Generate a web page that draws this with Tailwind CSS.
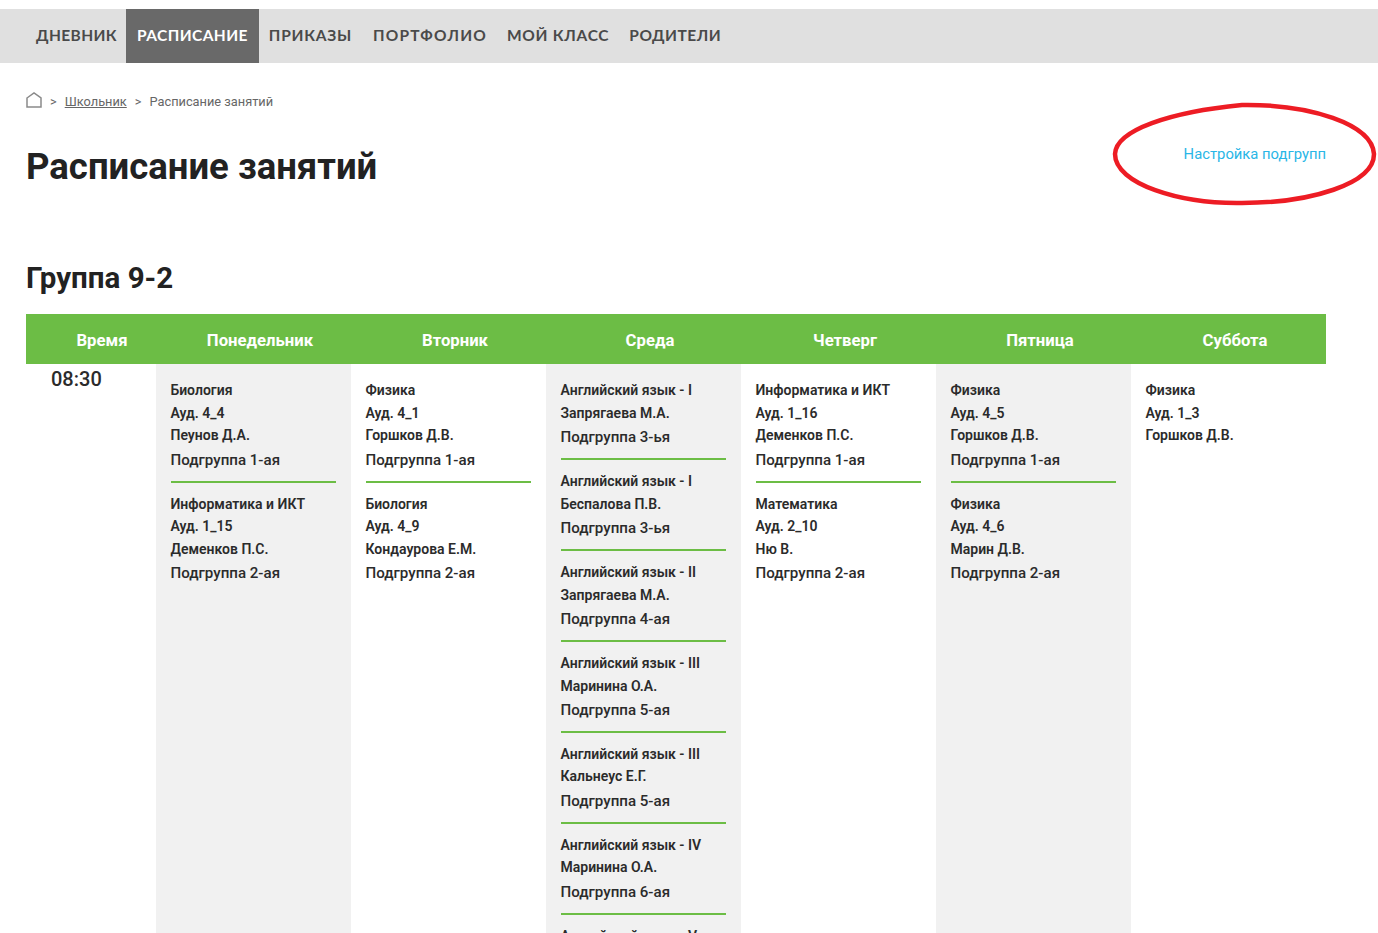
<!DOCTYPE html>
<html lang="ru">
<head>
  <meta charset="UTF-8">
  <title>Расписание занятий</title>
  <script src="https://cdn.jsdelivr.net/npm/@tailwindcss/browser@4"></script>
</head>
<body class="h-screen overflow-hidden bg-white text-[#2b2b2b] font-['Roboto',sans-serif]">

  <!-- Top nav -->
  <nav class="mt-[9px] h-[54px] bg-[#e0e0e0] flex pl-[26px] font-['Lato',sans-serif] text-[15.5px] font-bold tracking-[0.5px] text-[#4a4a4a]">
    <a class="pl-[10px] pr-[9px] pb-[1px] flex items-center tracking-[0.4px]">ДНЕВНИК</a>
    <a class="px-[11px] pb-[1px] flex items-center bg-[#696969] text-white tracking-[0.4px]">РАСПИСАНИЕ</a>
    <a class="pl-[10px] pr-[11px] pb-[1px] flex items-center tracking-[0.75px]">ПРИКАЗЫ</a>
    <a class="px-[10px] pb-[1px] flex items-center tracking-[1.2px]">ПОРТФОЛИО</a>
    <a class="px-[10px] pb-[1px] flex items-center tracking-[0.7px]">МОЙ КЛАСС</a>
    <a class="px-[10px] pb-[1px] flex items-center">РОДИТЕЛИ</a>
  </nav>

  <!-- Breadcrumbs -->
  <div class="mt-[29px] ml-[26px] h-[20px] flex items-center gap-[8px] text-[12.8px] text-[#666]">
    <svg class="w-[16px] h-[16px] -mt-[5px]" viewBox="0 0 16 16" fill="none" stroke="#8a8a8a" stroke-width="1.5"><path d="M1 6 L8 1 L15 6 V15 H1 Z"/></svg>
    <span>&gt;</span>
    <a class="underline">Школьник</a>
    <span>&gt;</span>
    <span>Расписание занятий</span>
  </div>

  <!-- Title row -->
  <div class="relative px-[26px]">
    <h1 class="mt-[30px] text-[36.5px] leading-[50px] font-bold text-[#222]">Расписание занятий</h1>
    <a class="absolute right-[52px] top-[2px] text-[14.8px] leading-[20px] text-[#29b6e6]">Настройка подгрупп</a>
  </div>

  <h2 class="mt-[66px] ml-[26px] text-[29.5px] leading-[40px] font-bold text-[#222]">Группа 9-2</h2>

  <!-- Timetable -->
  <div class="mt-[16px] mx-[26px] w-[1300px]">
    <div class="h-[50px] pt-[3px] bg-[#6cbd45] grid grid-cols-[130px_repeat(6,195px)] items-center text-center text-white text-[16.7px] font-bold">
      <div class="pl-[22px]">Время</div>
      <div class="pl-[13px]">Понедельник</div>
      <div class="pl-[13px]">Вторник</div>
      <div class="pl-[13px]">Среда</div>
      <div class="pl-[13px]">Четверг</div>
      <div class="pl-[13px]">Пятница</div>
      <div class="pl-[13px]">Суббота</div>
    </div>
    <div id="rows" class="grid grid-cols-[130px_repeat(6,195px)] text-[14px] font-semibold"></div>
  </div>

  <!-- Red annotation -->
  <svg class="absolute left-[1110px] top-[100px] w-[268px] h-[110px]" viewBox="0 0 268 110" fill="none">
    <path d="M5 54 C6 30 60 12 132 5 C200 4 262 24 264 54 C264 84 200 103 132 103 C70 104 5 84 5 54 Z" stroke="#ed1c24" stroke-width="4.5"/>
  </svg>

  <script>
    const days = [
      [["Биология","Ауд. 4_4","Пеунов Д.А.","Подгруппа 1-ая"],["Информатика и ИКТ","Ауд. 1_15","Деменков П.С.","Подгруппа 2-ая"]],
      [["Физика","Ауд. 4_1","Горшков Д.В.","Подгруппа 1-ая"],["Биология","Ауд. 4_9","Кондаурова Е.М.","Подгруппа 2-ая"]],
      [["Английский язык - I","Запрягаева М.А.","Подгруппа 3-ья"],["Английский язык - I","Беспалова П.В.","Подгруппа 3-ья"],["Английский язык - II","Запрягаева М.А.","Подгруппа 4-ая"],["Английский язык - III","Маринина О.А.","Подгруппа 5-ая"],["Английский язык - III","Кальнеус Е.Г.","Подгруппа 5-ая"],["Английский язык - IV","Маринина О.А.","Подгруппа 6-ая"],["Английский язык - V","Маринина О.А.","Подгруппа 7-ая"]],
      [["Информатика и ИКТ","Ауд. 1_16","Деменков П.С.","Подгруппа 1-ая"],["Математика","Ауд. 2_10","Ню В.","Подгруппа 2-ая"]],
      [["Физика","Ауд. 4_5","Горшков Д.В.","Подгруппа 1-ая"],["Физика","Ауд. 4_6","Марин Д.В.","Подгруппа 2-ая"]],
      [["Физика","Ауд. 1_3","Горшков Д.В."]]
    ];

    // the "Подгруппа" line sits a little lower and wider than the rest of the block
    const line = t => `<div class="leading-[22.6px] -ml-[0.5px] ${t.startsWith('Подгруппа') ? 'mt-[2px] text-[15.1px] font-medium' : ''}">${t}</div>`;

    const lesson = (lines, last) => `
      <div class="${last ? '' : 'border-b-[2px] border-[#6cbd45] pb-[9.2px] mb-[10px]'}">
        ${lines.map(line).join('')}
      </div>`;

    document.getElementById("rows").innerHTML =
      `<div class="pl-[25px] pt-[3px] text-[20px] leading-[25px] font-medium">08:30</div>` +
      days.map((day, i) => `
        <div class="${i % 2 === 0 ? 'bg-[#f1f1f1]' : ''} px-[15px] pt-[15px] h-[700px]">
          ${day.map((l, j) => lesson(l, j === day.length - 1)).join('')}
        </div>`).join('');
  </script>
</body>
</html>
